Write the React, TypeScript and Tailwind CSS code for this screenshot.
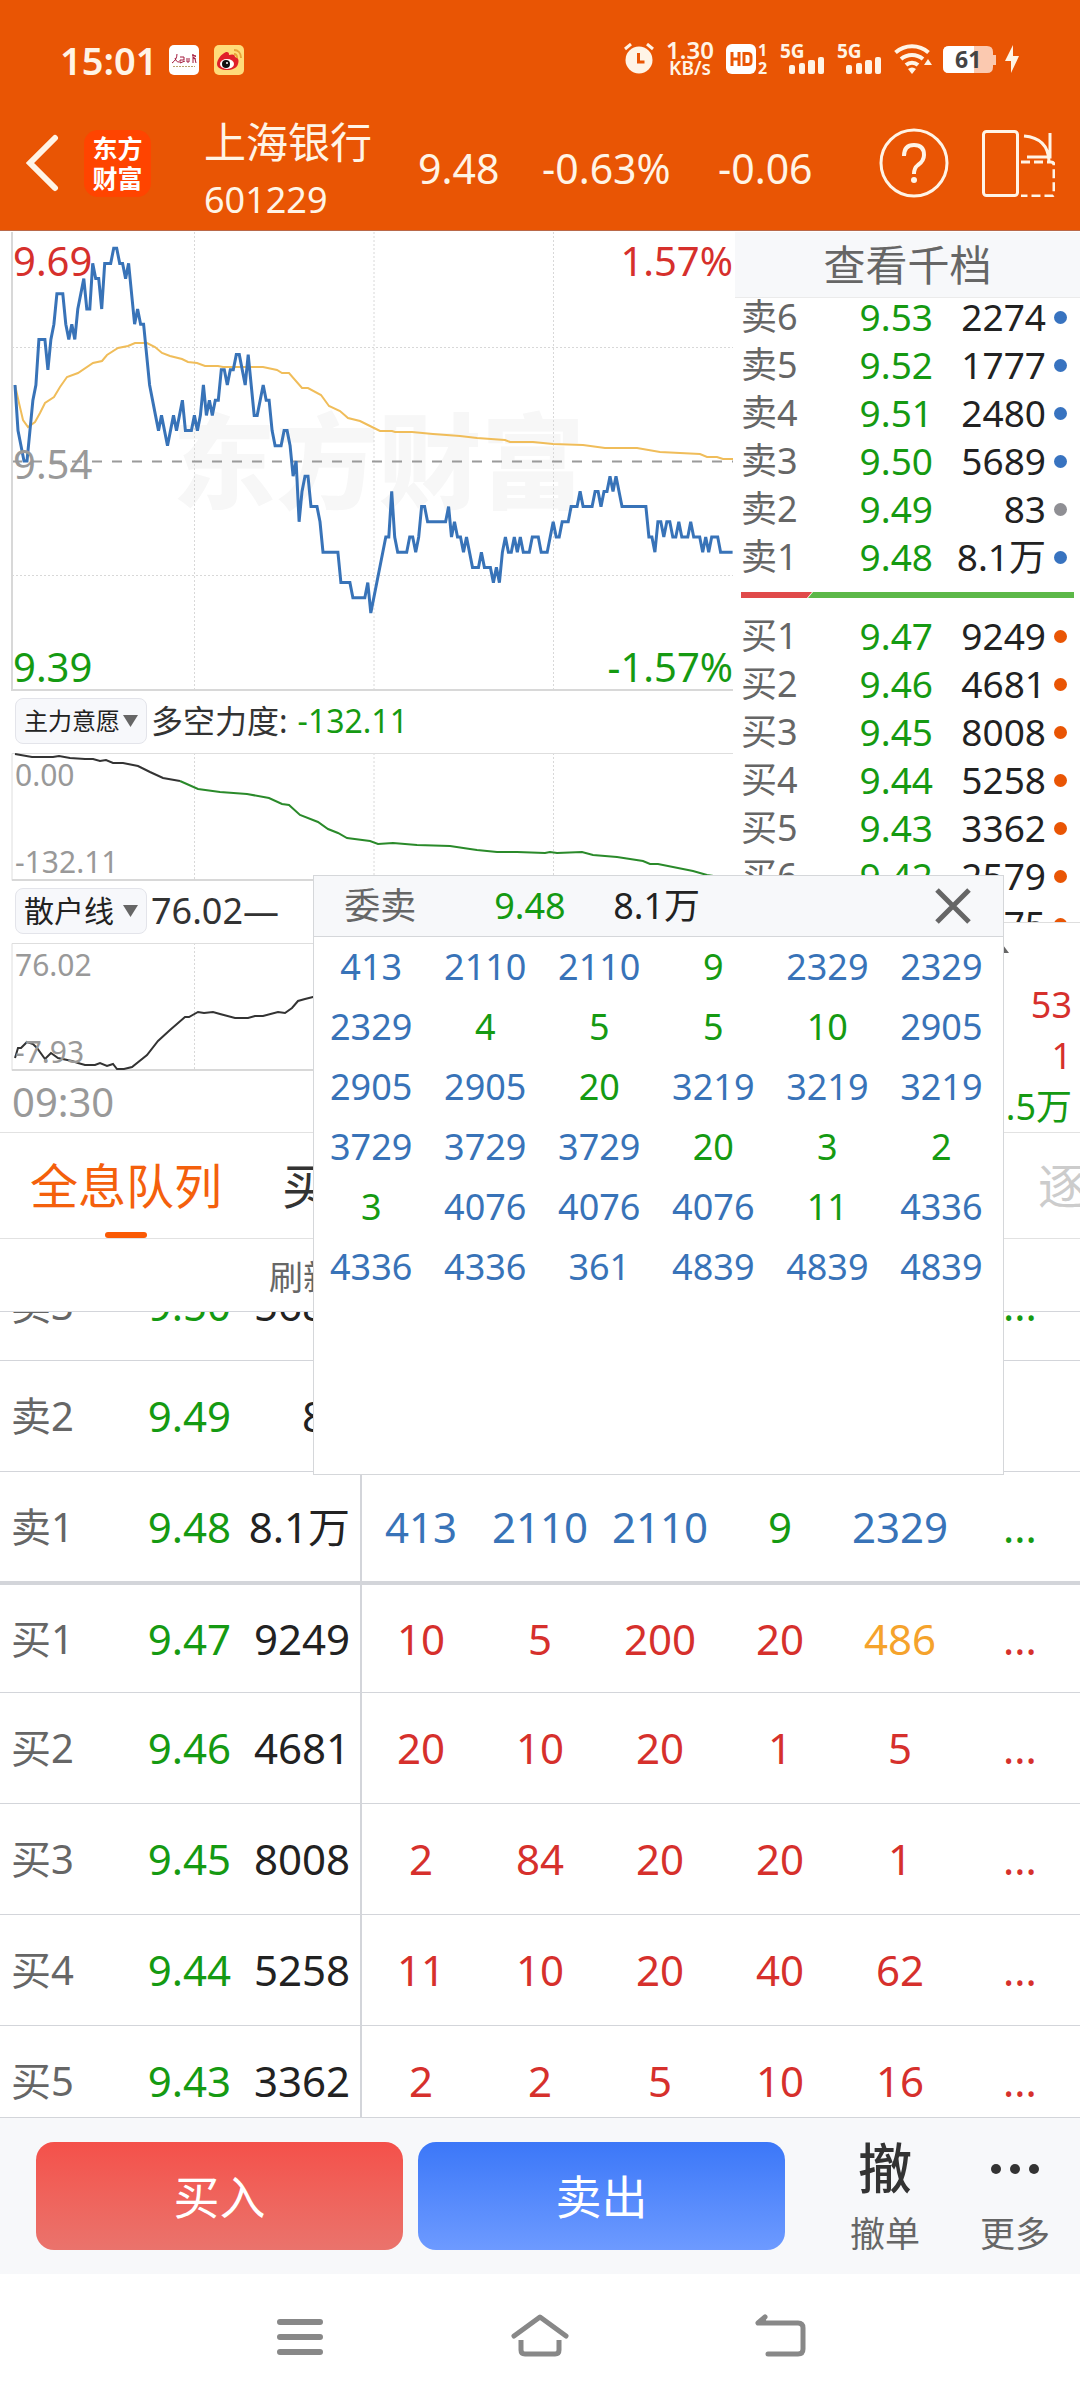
const colors: Record<string, string> = {
  b: "text-[#3873b8]",
  g: "text-[#159a12]",
  r: "text-[#d6302c]",
  y: "text-[#f5a32c]",
};

// price by minute, in cents away from the previous close
const prices: number[][] = [
  [0, 5], [1, 2], [2, 1], [3, 0], [4, 0], [6, 4], [7, 5], [8, 8], [10, 8], [11, 6], [12, 8], [13, 9],
  [14, 11], [16, 11], [17, 9], [18, 8], [19, 9], [20, 8], [21, 10], [23, 12], [24, 10], [25, 10],
  [26, 13], [27, 12], [28, 12], [29, 10], [30, 13], [32, 13], [33, 14], [34, 14], [35, 13], [36, 13],
  [37, 12], [38, 13], [39, 11], [40, 9], [41, 10], [42, 9], [43, 9], [44, 7], [45, 5], [47, 3],
  [48, 2], [49, 3], [51, 1], [53, 3], [54, 2], [56, 4], [57, 2], [59, 2], [60, 3], [61, 2], [62, 3],
  [63, 5], [64, 3], [65, 4], [66, 3], [67, 4], [68, 4], [69, 6], [70, 6], [71, 5], [72, 6], [73, 6],
  [74, 7], [75, 7], [77, 5], [78, 7], [80, 3], [81, 3], [83, 5], [84, 4], [85, 4], [86, 2], [87, 1],
  [89, 1], [90, 2], [91, 2], [92, 1], [93, -1], [94, 0], [95, -4], [96, -2], [97, -1], [98, -1],
  [99, -3], [101, -3], [102, -4], [103, -6], [108, -6], [109, -8], [112, -8], [113, -9], [117, -9],
  [118, -8], [119, -10], [124, -5], [125, -5], [126, -2], [127, -5], [128, -6], [131, -6], [132, -5],
  [133, -5], [134, -6], [135, -5], [136, -3], [137, -3], [138, -4], [144, -4], [145, -3], [146, -5],
  [147, -4], [148, -5], [149, -5], [150, -6], [151, -5], [153, -7], [155, -7], [156, -6], [157, -7],
  [159, -7], [160, -8], [161, -7], [162, -8], [163, -6], [164, -5], [165, -6], [166, -6], [167, -5],
  [168, -6], [169, -5], [170, -6], [172, -6], [173, -5], [175, -5], [176, -6], [178, -6], [180, -4],
  [181, -5], [182, -5], [183, -4], [185, -4], [186, -3], [188, -3], [189, -2], [190, -3], [193, -3],
  [194, -2], [195, -2], [196, -3], [197, -2], [198, -2], [199, -1], [200, -2], [201, -1], [203, -3],
  [211, -3], [212, -5], [213, -5], [214, -6], [215, -4], [216, -4], [217, -5], [218, -4], [219, -4],
  [220, -5], [221, -5], [222, -4], [223, -5], [225, -5], [226, -4], [227, -5], [229, -5], [230, -6],
  [231, -5], [232, -6], [233, -5], [235, -5], [236, -6], [240, -6],
];
const priceLine = prices
  .map(([minute, cents]) => `${(15 + minute * 2.99).toFixed(1)},${(229 - cents * 15.2).toFixed(1)}`)
  .join(" ");

const averageLine =
  "15,153 19,171 23,188 28,195 35,190 40,181 45,171 54,165 60,155 67,145 78,141 93,131 102,129 107,123 118,116 128,114 135,111 147,111 155,115 162,121 170,124 182,127 188,130 197,131 205,134 218,134 223,135 263,135 277,138 282,141 289,141 302,156 308,156 321,163 329,174 340,179 348,186 360,189 370,194 380,199 392,199 395,200 412,200 433,202 460,204 477,206 505,208 510,210 533,210 553,212 583,213 605,216 637,216 660,220 700,222 707,225 717,225 723,227 733,227";
const forceLineDark =
  "15,1 32,4 53,4 59,3 70,5 85,6 93,6 100,8 106,7 113,10 123,10 138,13 150,19 163,25 180,28";
const forceLineGreen =
  "180,28 198,36 220,39 247,41 269,45 282,51 289,52 300,62 318,69 328,76 338,80 347,85 370,88 378,91 393,90 417,92 450,93 470,96 477,97 497,99 517,99 545,100 550,99 557,100 582,99 593,102 617,104 643,108 650,111 658,111 693,118 707,122 733,126";
const retailLine =
  "15,115 18,105 21,105 27,99 33,101 37,105 45,116 51,110 58,115 72,118 78,120 85,122 95,122 100,120 107,123 113,121 117,126 124,126 132,124 147,112 158,98 170,87 185,74 189,74 198,69 204,70 213,69 220,71 235,75 248,75 255,73 263,73 278,69 285,70 292,65 298,58 305,56 313,54 330,50";

const asks = [
  ["卖6", "9.53", "2274", "bg-[#3873c0]"],
  ["卖5", "9.52", "1777", "bg-[#3873c0]"],
  ["卖4", "9.51", "2480", "bg-[#3873c0]"],
  ["卖3", "9.50", "5689", "bg-[#3873c0]"],
  ["卖2", "9.49", "83", "bg-[#8f8f94]"],
  ["卖1", "9.48", "8.1万", "bg-[#3873c0]"],
];
const bids = [
  ["买1", "9.47", "9249", "bg-[#e95504]"],
  ["买2", "9.46", "4681", "bg-[#e95504]"],
  ["买3", "9.45", "8008", "bg-[#e95504]"],
  ["买4", "9.44", "5258", "bg-[#e95504]"],
  ["买5", "9.43", "3362", "bg-[#e95504]"],
  ["买6", "9.42", "2579", "bg-[#e95504]"],
  ["买7", "9.41", "75", "bg-[#e95504]"],
];

const queue = [
  { level: "卖3", price: "9.50", amount: "5689", orders: ["", "", "", "", "", "g..."], row: "h-[111px] border-b" },
  { level: "卖2", price: "9.49", amount: "83", orders: ["", "", "", "", "", ""], row: "h-[111px] border-b" },
  { level: "卖1", price: "9.48", amount: "8.1万", orders: ["b413", "b2110", "b2110", "g9", "b2329", "g..."], row: "h-[113px] border-b-4" },
  { level: "买1", price: "9.47", amount: "9249", orders: ["r10", "r5", "r200", "r20", "y486", "r..."], row: "h-[108px] border-b" },
  { level: "买2", price: "9.46", amount: "4681", orders: ["r20", "r10", "r20", "r1", "r5", "r..."], row: "h-[111px] border-b" },
  { level: "买3", price: "9.45", amount: "8008", orders: ["r2", "r84", "r20", "r20", "r1", "r..."], row: "h-[111px] border-b" },
  { level: "买4", price: "9.44", amount: "5258", orders: ["r11", "r10", "r20", "r40", "r62", "r..."], row: "h-[111px] border-b" },
  { level: "买5", price: "9.43", amount: "3362", orders: ["r2", "r2", "r5", "r10", "r16", "r..."], row: "h-[111px] border-b" },
];

const popupRows = [
  ["b413", "b2110", "b2110", "g9", "b2329", "b2329"],
  ["b2329", "g4", "g5", "g5", "g10", "b2905"],
  ["b2905", "b2905", "g20", "b3219", "b3219", "b3219"],
  ["b3729", "b3729", "b3729", "g20", "g3", "g2"],
  ["g3", "b4076", "b4076", "b4076", "g11", "b4336"],
  ["b4336", "b4336", "b361", "b4839", "b4839", "b4839"],
];

const Signal = () => (
  <svg width="45" height="32" viewBox="0 0 45 32" fill="#fff4e6">
    <text x="0" y="15" fontSize="19" fontWeight="700">
      5G
    </text>
    <rect x="9" y="22" width="6" height="9" rx="2" />
    <rect x="19" y="20" width="6" height="11" rx="2" />
    <rect x="28" y="17" width="7" height="14" rx="2" />
    <rect x="38" y="14" width="6" height="17" rx="2" />
  </svg>
);

const StatusBar = () => (
  <div className="flex h-[72px] items-end justify-between px-[60px] text-[#fff4e6]">
    <div className="flex h-[32px] items-center">
      <div className="w-[109px] text-[38px] font-semibold leading-[32px]">15:01</div>
      <div className="flex h-[30px] w-[30px] flex-col items-center justify-center rounded-[5px] bg-white">
        <svg width="30" height="30" viewBox="0 0 30 30" fill="none" stroke="#a3193c">
          <path d="M8 9c0 4-2 7-5 9M6 13c1 3 2 4 4 4M11 12h4v3h-4v3l5-2M18 13v4h2v-4M23 10l4 1-3 2 3 1M24 9v9M26 14l1 4" />
          <path d="M4 21.500h22" stroke="#b9a06c" strokeDasharray="2 1" />
        </svg>
      </div>
      <div className="ml-[15px] flex h-[30px] w-[30px] items-center justify-center rounded-[5px] bg-[#ffdc7a]">
        <svg width="30" height="30" viewBox="0 0 30 30">
          <path d="M3 19c0-4 4-10 9-12 3 0 3 1 3 3 3-1 6-1 6 2 4 1 4 4 3 7-1 4-6 6-11 6s-10-2-10-6z" fill="#e0202a" />
          <ellipse cx="13" cy="19" rx="7" ry="5" fill="#fff" />
          <circle cx="12" cy="19" r="4" fill="#111" />
          <circle cx="13" cy="18" r="1" fill="#fff" />
          <path d="M20 5c4 0 7 3 7 8M20 9c2 0 3 2 3 4" fill="none" stroke="#e8a33a" strokeWidth="2" />
        </svg>
      </div>
    </div>
    <div className="flex h-[34px] items-center">
      <svg width="30" height="32" viewBox="0 0 30 32">
        <circle cx="15" cy="17" r="13.500" fill="#fff4e6" />
        <path d="M1 6l6-5M29 6l-6-5" stroke="#fff4e6" strokeWidth="3" />
        <path d="M14.500 10v9h6" fill="none" stroke="#e95504" strokeWidth="3" />
      </svg>
      <div className="ml-[13px] flex w-[46px] flex-col items-center text-center font-semibold">
        <span className="text-[24px] leading-[19px]">1.30</span>
        <span className="text-[19px] leading-[19px]">KB/s</span>
      </div>
      <svg className="ml-[13px]" width="43" height="32" viewBox="0 0 43 32" fill="#fff4e6">
        <rect y="1" width="30" height="30" rx="6" fill="#fff" />
        <path d="M6 9v14M13 9v14M6 16h7M18 10.500h4q3 0 3 3v5q0 3-3 3h-4z" fill="none" stroke="#e95504" strokeWidth="3" />
        <text x="32" y="13" fontSize="16" fontWeight="700">1</text>
        <text x="32" y="31" fontSize="16" fontWeight="700">2</text>
      </svg>
      <div className="ml-[11px]">
        <Signal />
      </div>
      <div className="ml-[12px]">
        <Signal />
      </div>
      <svg className="ml-[12px]" width="38" height="32" viewBox="0 0 38 32" fill="none" stroke="#fff4e6" strokeWidth="4">
        <path d="M1.500 9.500a25 25 0 0 1 33 0M7 16a17 17 0 0 1 22 0M12 22a9 9 0 0 1 12 0" />
        <path d="M14 26a6 6 0 0 1 8 0l-4 5z" fill="#fff4e6" stroke="none" />
        <path d="M30 22l4-6 4 6z" fill="#fff4e6" stroke="none" />
      </svg>
      <svg className="ml-[10px]" width="56" height="32" viewBox="0 0 56 32">
        <path d="M7 3h38q6 0 6 6v3h3v10h-3v2q0 6-6 6H7q-6 0-6-6V9q0-6 6-6z" fill="#fbc9b0" />
        <path d="M7 3h25v27H7q-6 0-6-6V9q0-6 6-6z" fill="#fff" />
        <text x="13" y="25" fontSize="23" fontWeight="700" fill="#444">61</text>
      </svg>
      <svg className="ml-[6px]" width="16" height="32" viewBox="0 0 16 32" fill="#fff4e6">
        <path d="M9 2v11h6L7 30V18H1z" />
      </svg>
    </div>
  </div>
);

const Header = () => (
  <header className="border-b border-[#b9694a] bg-[#e95504] pt-[4px] text-[#fff4e6]">
    <StatusBar />
    <div className="flex h-[154px] items-center pl-[26px] pr-[25px] pt-[20px]">
      <button aria-label="返回">
        <svg width="34" height="60" viewBox="0 0 34 60" fill="none" stroke="#fff4e6" strokeWidth="6" strokeLinecap="round">
          <path d="M29 5L4 30l25 25" />
        </svg>
      </button>
      <div className="ml-[24px] flex h-[67px] w-[67px] flex-col items-center justify-center rounded-[14px] bg-[#ff4400] text-[25px] font-bold leading-[30px] text-white">
        <span>东方</span>
        <span>财富</span>
      </div>
      <div className="ml-[53px] w-[214px] pt-[14px]">
        <h1 className="text-[42px] leading-[60px]">上海银行</h1>
        <div className="text-[36px] leading-[56px]">601229</div>
      </div>
      <div className="flex flex-1 items-center pt-[10px] text-[41px] leading-[48px]">
        <span className="w-[124px]">9.48</span>
        <span className="w-[176px]">-0.63%</span>
        <span>-0.06</span>
      </div>
      <button className="mr-[32px]" aria-label="帮助">
        <svg width="70" height="70" viewBox="0 0 70 70" fill="none" stroke="#fff4e6" strokeWidth="3">
          <circle cx="35" cy="35" r="33" />
          <path d="M25 28q0-11 10-11t10 10q0 6-6 10-4 3-4 9" strokeWidth="4" />
          <circle cx="35" cy="52" r="3" fill="#fff4e6" stroke="none" />
        </svg>
      </button>
      <button aria-label="横屏">
        <svg width="74" height="68" viewBox="0 0 74 68" fill="none" stroke="#fff4e6" strokeWidth="3">
          <rect x="2.500" y="2.500" width="34" height="64" rx="3" />
          <path d="M43 7q24 2 25 25M69 4v24H46" />
          <path d="M40 33h30q3 0 3 3v28q0 3-3 3H40" strokeDasharray="9 4" />
        </svg>
      </button>
    </div>
  </header>
);

const GridLines = ({ height }: { height: number }) => (
  <g stroke="#d8d8d8" strokeDasharray="2 2">
    <path d={`M194.500 0v${height}M374 0v${height}M553.500 0v${height}`} />
  </g>
);

const PriceChart = () => (
  <div className="relative h-[459px] text-[40px] leading-[48px]">
    <div className="absolute inset-x-0 top-[154px] pl-[22px] text-center text-[103px] font-black leading-[150px] text-[#f7f7f7]">
      东方财富
    </div>
    <svg className="absolute inset-0 h-full w-full" viewBox="0 0 735 459" preserveAspectRatio="none" fill="none">
      <GridLines height={459} />
      <path d="M12 115.500h721M12 343.500h721" stroke="#d8d8d8" strokeDasharray="2 2" />
      <path d="M12 229.500h721" stroke="#9a9a9a" strokeWidth="2" strokeDasharray="10 10" />
      <path d="M12 0v458h721" stroke="#d8d8d8" strokeWidth="2" />
      <polyline points={averageLine} stroke="#f0bd5a" strokeWidth="2" />
      <polyline points={priceLine} stroke="#3873b8" strokeWidth="3" />
    </svg>
    <div className="relative flex h-full flex-col justify-between pl-[13px] pr-[2px] pt-[5px]">
      <div className="flex justify-between text-[#d6302c]">
        <span>9.69</span>
        <span>1.57%</span>
      </div>
      <div className="text-[#999]">9.54</div>
      <div className="flex justify-between text-[#159a12]">
        <span>9.39</span>
        <span>-1.57%</span>
      </div>
    </div>
  </div>
);

interface SubChartProps {
  top: string;
  bottom: string;
  children: React.ReactNode;
}

const SubChart = ({ top, bottom, children }: SubChartProps) => (
  <div className="relative h-[128px] text-[30px] leading-[32px] text-[#999]">
    <svg className="absolute inset-0 h-full w-full" viewBox="0 0 735 128" preserveAspectRatio="none" fill="none">
      <GridLines height={128} />
      <path d="M733 .5H12v127" stroke="#dedede" strokeWidth="1" />
      <path d="M12 127h721" stroke="#d8d8d8" strokeWidth="2" />
      {children}
    </svg>
    <div className="relative flex h-full flex-col justify-between pb-[3px] pl-[15px] pt-[6px]">
      <span>{top}</span>
      <span>{bottom}</span>
    </div>
  </div>
);

interface IndicatorSelectProps {
  name: string;
  size: string;
}

const IndicatorSelect = ({ name, size }: IndicatorSelectProps) => (
  <div className="relative mr-[4px]">
    <select
      aria-label="指标"
      className={`${size} block h-[46px] w-[132px] appearance-none rounded-[8px] border border-[#e3e4ea] bg-[#f7f8fb] pl-[8px] text-[#222]`}
    >
      <option>{name}</option>
    </select>
    <svg className="pointer-events-none absolute right-[9px] top-[17px]" width="15" height="12" viewBox="0 0 15 12" fill="#666">
      <path d="M0 0h15L7.500 12z" />
    </svg>
  </div>
);

const BookTable = ({ rows }: { rows: string[][] }) => (
  <table className="w-full shrink-0 table-fixed text-[37px] leading-[44px]">
    <tbody>
      {rows.map(([level, price, amount, dot]) => (
        <tr key={level} className="h-[48px]">
          <th className="w-[86px] p-0 pl-[6px] text-left text-[36px] font-normal text-[#666]">{level}</th>
          <td className="w-[112px] p-0 text-right text-[#159a12]">{price}</td>
          <td className="p-0 text-right text-[#222]">{amount}</td>
          <td className="w-[34px] p-0">
            <div className={`${dot} ml-[8px] h-[13px] w-[13px] rounded-full`} />
          </td>
        </tr>
      ))}
    </tbody>
  </table>
);

const OrderBook = () => (
  <aside className="flex w-[345px] flex-col">
    <button className="h-[66px] border-b border-[#ebebeb] bg-[#f7f8fa] text-[42px] leading-[64px] text-[#666]">
      查看千档
    </button>
    <div className="flex h-[283px] flex-col justify-end overflow-hidden">
      <BookTable rows={asks} />
    </div>
    <svg className="mb-[14px] mt-[11px] h-[6px] w-full px-[6px]" viewBox="0 0 333 6" preserveAspectRatio="none">
      <path d="M0 0h71l-5 6H0z" fill="#e04a4a" />
      <path d="M72 0h261v6H67z" fill="#5cb848" />
    </svg>
    <div className="h-[311px] overflow-hidden border-b border-[#dedede]">
      <BookTable rows={bids} />
    </div>
    <div className="flex flex-1 flex-col justify-end pr-[8px] text-right text-[36px] leading-[51px]">
      <svg className="mb-[26px] mr-[63px] self-end" width="18" height="15" viewBox="0 0 18 15" fill="#666">
        <path d="M9 3l9 12H0z" />
      </svg>
      <div className="text-[#d6302c]">53</div>
      <div className="text-[#d6302c]">1</div>
      <div className="text-[#159a12]">.5万</div>
    </div>
  </aside>
);

const OrderPopup = () => (
  <div className="absolute left-[29%] top-[644px] h-[600px] w-[64%] border border-[#d5d7da] bg-white text-[36px]">
    <div className="flex h-[61px] items-center border-b border-[#d5d7da] bg-[#f7f8fa] pl-[30px] pr-[30px] leading-[44px]">
      <span className="w-[150px] text-[#666]">委卖</span>
      <span className="w-[119px] text-[#159a12]">9.48</span>
      <span className="flex-1 text-[#222]">8.1万</span>
      <button aria-label="关闭">
        <svg width="40" height="40" viewBox="0 0 40 40" stroke="#666" strokeWidth="5">
          <path d="M4 4l32 32M36 4L4 36" />
        </svg>
      </button>
    </div>
    <div className="grid grid-cols-6 pr-[5px] text-center leading-[60px]">
      {popupRows.flat().map((order, index) => (
        <span key={index} className={colors[order[0]]}>
          {order.slice(1)}
        </span>
      ))}
    </div>
  </div>
);

const QueueTable = () => (
  <div className="h-[806px] overflow-hidden border-b border-[#d3d5da]">
    <table className="-mt-[62px] w-full table-fixed border-separate border-spacing-0 text-[42px] leading-[48px]">
      <tbody>
        {queue.map(({ level, price, amount, orders, row }) => (
          <tr key={level}>
            <th className={`${row} border-[#d3d5da] p-0 pl-[11px] text-left text-[40px] font-normal text-[#666]`}>{level}</th>
            <td className={`${row} border-[#d3d5da] p-0 pr-[9px] text-right text-[#159a12]`}>{price}</td>
            <td className={`${row} border-[#d3d5da] p-0 pr-[10px] text-right text-[#222]`}>{amount}</td>
            {orders.map((order, index) => (
              <td
                key={index}
                className={`${row} ${colors[order[0]] ?? ""} border-[#d3d5da] p-0 text-center first-of-type:border-l-2 nth-[4]:border-l-2`}
              >
                {order.slice(1)}
              </td>
            ))}
          </tr>
        ))}
      </tbody>
    </table>
  </div>
);

const TradeBar = () => (
  <div className="flex h-[156px] bg-[#f7f8fa]">
    <div className="flex flex-1 gap-[15px] pb-[24px] pl-[36px] pr-[35px] pt-[24px] text-[46px] text-white">
      <button className="flex-1 rounded-[18px] bg-linear-to-b from-[#f4504a] to-[#ea736c]">买入</button>
      <button className="flex-1 rounded-[18px] bg-linear-to-b from-[#3b77f8] to-[#6d9aff]">卖出</button>
    </div>
    <button className="flex w-[130px] flex-col items-center pt-[18px] text-[35px] leading-[44px] text-[#666]">
      <span className="h-[76px] text-[54px] font-medium leading-[64px] text-[#333]">撤</span>
      撤单
    </button>
    <button className="flex w-[130px] flex-col items-center pt-[18px] text-[35px] leading-[44px] text-[#666]">
      <svg className="h-[76px]" width="48" height="76" viewBox="0 0 48 76" fill="#333">
        <circle cx="5" cy="33" r="5" />
        <circle cx="24" cy="33" r="5" />
        <circle cx="43" cy="33" r="5" />
      </svg>
      更多
    </button>
  </div>
);

const SystemNav = () => (
  <nav className="mx-auto grid h-[126px] w-2/3 grid-cols-3 place-items-center">
    <button aria-label="菜单">
      <svg width="60" height="50" viewBox="0 0 60 50" stroke="#888" strokeWidth="6" strokeLinecap="round">
        <path d="M10 10h40M10 25h40M10 40h40" />
      </svg>
    </button>
    <button aria-label="主页">
      <svg width="60" height="50" viewBox="0 0 60 50" fill="none" stroke="#888" strokeWidth="5" strokeLinecap="round" strokeLinejoin="round">
        <path d="M4 24L30 5l26 19" />
        <path d="M11 28v10q0 4 4 4h30q4 0 4-4V28" strokeLinecap="butt" />
      </svg>
    </button>
    <button aria-label="后退">
      <svg width="60" height="50" viewBox="0 0 60 50" fill="none" stroke="#888" strokeWidth="5" strokeLinecap="round" strokeLinejoin="round">
        <path d="M15 5L8 11h40q5 0 5 5v21q0 5-5 5H18" />
        <path d="M15 5v6H8z" fill="#888" strokeWidth="2" />
      </svg>
    </button>
  </nav>
);

const App = () => (
  <div className="min-h-screen bg-white font-['Noto_Sans','Noto_Sans_CJK_SC',sans-serif]">
    <Header />
    <main className="relative pt-px">
      <div className="flex border-b border-[#e2e2e2]">
        <div className="min-w-0 flex-1">
          <PriceChart />
          <div className="flex h-[62px] items-center pb-[2px] pl-[15px] text-[32px] leading-[44px] text-[#333]">
            <IndicatorSelect name="主力意愿" size="text-[24px]" />
            多空力度:
            <span className="ml-[10px] text-[#159a12]">-132.11</span>
          </div>
          <SubChart top="0.00" bottom="-132.11">
            <polyline points={forceLineDark} stroke="#333" strokeWidth="2" />
            <polyline points={forceLineGreen} stroke="#2a8a2a" strokeWidth="2" />
          </SubChart>
          <div className="flex h-[62px] items-center pb-[2px] pl-[15px] text-[36px] leading-[44px] text-[#333]">
            <IndicatorSelect name="散户线" size="text-[30px]" />
            76.02—
          </div>
          <SubChart top="76.02" bottom="-7.93">
            <polyline points={retailLine} stroke="#333" strokeWidth="2" />
          </SubChart>
          <div className="h-[61px] pl-[12px] text-[40px] leading-[62px] text-[#999]">09:30</div>
        </div>
        <OrderBook />
      </div>
      <div className="flex h-[106px] gap-[60px] border-b border-[#e2e2e2] pl-[30px] text-[48px] leading-[106px] text-[#333]">
        <button className="flex flex-col items-center text-[#f4600c]">
          <span className="h-[99px]">全息队列</span>
          <span className="h-[6px] w-[42px] rounded-full bg-[#fa5a05]" />
        </button>
        <button className="self-start">买</button>
        <button className="ml-auto w-[42px] self-start overflow-hidden text-[#ccc]">逐</button>
      </div>
      <div className="h-[73px] border-b border-[#d3d5da] pl-[269px] text-[34px] leading-[76px] text-[#666]">刷新</div>
      <QueueTable />
      <OrderPopup />
    </main>
    <TradeBar />
    <SystemNav />
  </div>
);

export default App;
